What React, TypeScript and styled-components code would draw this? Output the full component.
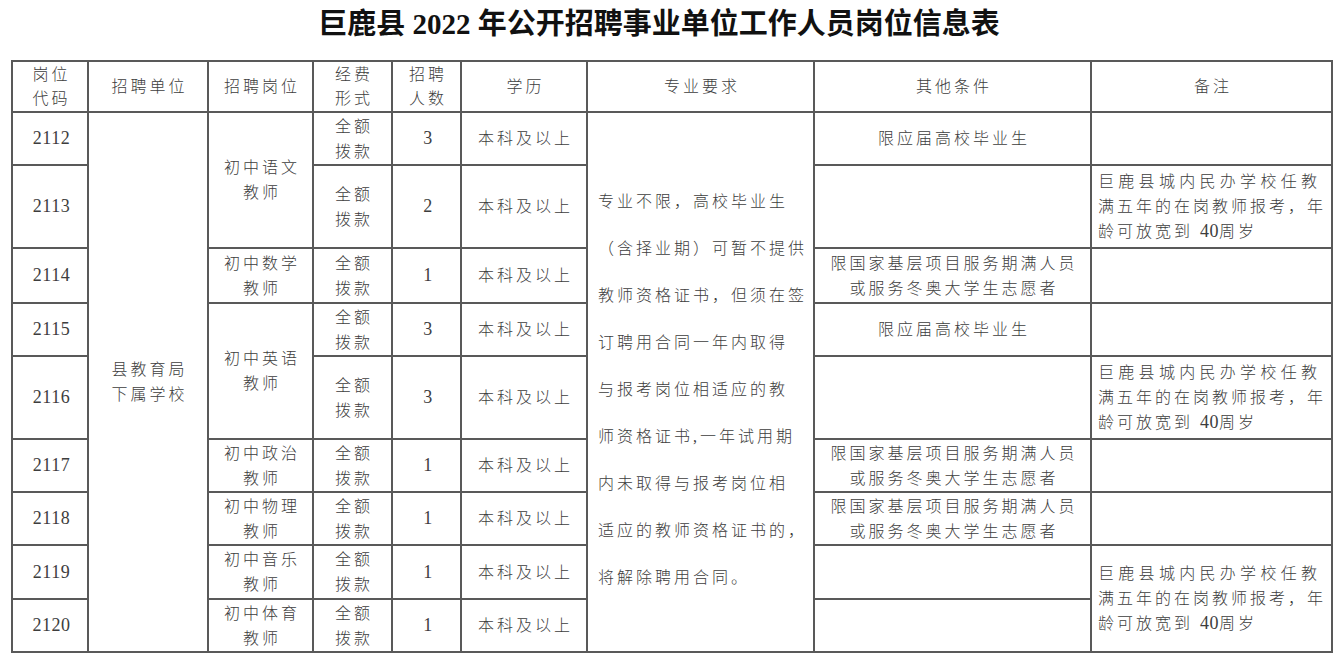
import React from 'react';
import styled, { createGlobalStyle } from 'styled-components';

const Global = createGlobalStyle`
  html, body { margin: 0; padding: 0; background: #fff; }
  body { font-family: "Liberation Serif", "Noto Sans CJK SC", serif; color: #3a3a3a; }
`;

const Page = styled.div`
  width: 1340px;
  height: 655px;
  overflow: hidden;
  box-sizing: border-box;
  padding-left: 11px;
  display: flex;
  flex-direction: column;
  align-items: flex-start;
`;

const Title = styled.h1`
  margin: 0;
  width: 1322px;
  height: 60px;
  box-sizing: border-box;
  padding-right: 26px;
  text-align: center;
  font-family: "Liberation Serif", "Noto Sans CJK SC", serif;
  font-weight: bold;
  font-size: 29px;
  line-height: 48px;
  color: #111;
`;

const Table = styled.table`
  border-collapse: collapse;
  table-layout: fixed;
  width: 1322px;
`;

const Row = styled.tr<{ $h: number }>`
  height: ${(p) => p.$h}px;
`;

const cellBase = `
  border: 2px solid #595959;
  vertical-align: middle;
  font-family: "Liberation Serif", "Noto Sans CJK SC", serif;
  font-weight: 300;
  font-size: 16px;
  letter-spacing: 3px;
  line-height: 25px;
  color: #3d3d3d;
  white-space: nowrap;
  overflow: hidden;
`;

const Head = styled.th`
  ${cellBase}
  font-weight: 300;
  line-height: 24px;
  padding: 0 0 0 3px;
  text-align: center;
`;

const Cell = styled.td<{ $align?: 'left' | 'center'; $pad?: number }>`
  ${cellBase}
  text-align: ${(p) => p.$align ?? 'center'};
  padding: ${(p) => (p.$align === 'left' ? `0 0 0 ${p.$pad ?? 6}px` : '0 0 0 3px')};
`;

const Major = styled(Cell)`
  line-height: 47px;
  padding-top: 15px;
`;

const Spread = styled.span`
  letter-spacing: 4.3px;
`;

const Num = styled.span`
  font-family: "Liberation Serif", serif;
  font-size: 18px;
  letter-spacing: 0.5px;
  font-weight: normal;
`;

const cols = [76, 120, 105, 79, 69, 126, 227, 277, 241];

const Fund = () => (
  <Cell>
    全额
    <br />
    拨款
  </Cell>
);

const Edu = () => <Cell>本科及以上</Cell>;

const Grassroots = () => (
  <Cell>
    限国家基层项目服务期满人员
    <br />
    或服务冬奥大学生志愿者
  </Cell>
);

const Fresh = () => <Cell>限应届高校毕业生</Cell>;

const Remark = ({ rows }: { rows?: number }) => (
  <Cell $align="left" $pad={6} rowSpan={rows}>
    <Spread>巨鹿县城内民办学校任教</Spread>
    <br />
    满五年的在岗教师报考，年
    <br />
    龄可放宽到 <Num>40</Num>周岁
  </Cell>
);

const Code = ({ n }: { n: string }) => (
  <Cell>
    <Num>{n}</Num>
  </Cell>
);

const Count = ({ n }: { n: string }) => (
  <Cell>
    <Num>{n}</Num>
  </Cell>
);

const Post = ({ name, rows }: { name: string; rows?: number }) => (
  <Cell rowSpan={rows}>
    {name}
    <br />
    教师
  </Cell>
);

const majorLines = [
  '专业不限，高校毕业生',
  '（含择业期）可暂不提供',
  '教师资格证书，但须在签',
  '订聘用合同一年内取得',
  '与报考岗位相适应的教',
  '师资格证书,一年试用期',
  '内未取得与报考岗位相',
  '适应的教师资格证书的，',
  '将解除聘用合同。',
];

export default function App() {
  return (
    <Page>
      <Global />
      <Title>巨鹿县 2022 年公开招聘事业单位工作人员岗位信息表</Title>
      <Table>
        <colgroup>
          {cols.map((w, i) => (
            <col key={i} style={{ width: w }} />
          ))}
        </colgroup>
        <thead>
          <Row $h={51}>
            <Head>
              岗位
              <br />
              代码
            </Head>
            <Head>招聘单位</Head>
            <Head>招聘岗位</Head>
            <Head>
              经费
              <br />
              形式
            </Head>
            <Head>
              招聘
              <br />
              人数
            </Head>
            <Head>学历</Head>
            <Head>专业要求</Head>
            <Head>其他条件</Head>
            <Head>备注</Head>
          </Row>
        </thead>
        <tbody>
          <Row $h={53}>
            <Code n="2112" />
            <Cell rowSpan={9}>
              县教育局
              <br />
              下属学校
            </Cell>
            <Post name="初中语文" rows={2} />
            <Fund />
            <Count n="3" />
            <Edu />
            <Major $align="left" $pad={10} rowSpan={9}>
              {majorLines.map((l, i) => (
                <React.Fragment key={i}>
                  {l}
                  {i < majorLines.length - 1 && <br />}
                </React.Fragment>
              ))}
            </Major>
            <Fresh />
            <Cell />
          </Row>
          <Row $h={83}>
            <Code n="2113" />
            <Fund />
            <Count n="2" />
            <Edu />
            <Cell />
            <Remark />
          </Row>
          <Row $h={55}>
            <Code n="2114" />
            <Post name="初中数学" />
            <Fund />
            <Count n="1" />
            <Edu />
            <Grassroots />
            <Cell />
          </Row>
          <Row $h={53}>
            <Code n="2115" />
            <Post name="初中英语" rows={2} />
            <Fund />
            <Count n="3" />
            <Edu />
            <Fresh />
            <Cell />
          </Row>
          <Row $h={83}>
            <Code n="2116" />
            <Fund />
            <Count n="3" />
            <Edu />
            <Cell />
            <Remark />
          </Row>
          <Row $h={53}>
            <Code n="2117" />
            <Post name="初中政治" />
            <Fund />
            <Count n="1" />
            <Edu />
            <Grassroots />
            <Cell />
          </Row>
          <Row $h={53}>
            <Code n="2118" />
            <Post name="初中物理" />
            <Fund />
            <Count n="1" />
            <Edu />
            <Grassroots />
            <Cell />
          </Row>
          <Row $h={54}>
            <Code n="2119" />
            <Post name="初中音乐" />
            <Fund />
            <Count n="1" />
            <Edu />
            <Cell />
            <Remark rows={2} />
          </Row>
          <Row $h={53}>
            <Code n="2120" />
            <Post name="初中体育" />
            <Fund />
            <Count n="1" />
            <Edu />
            <Cell />
          </Row>
        </tbody>
      </Table>
    </Page>
  );
}
